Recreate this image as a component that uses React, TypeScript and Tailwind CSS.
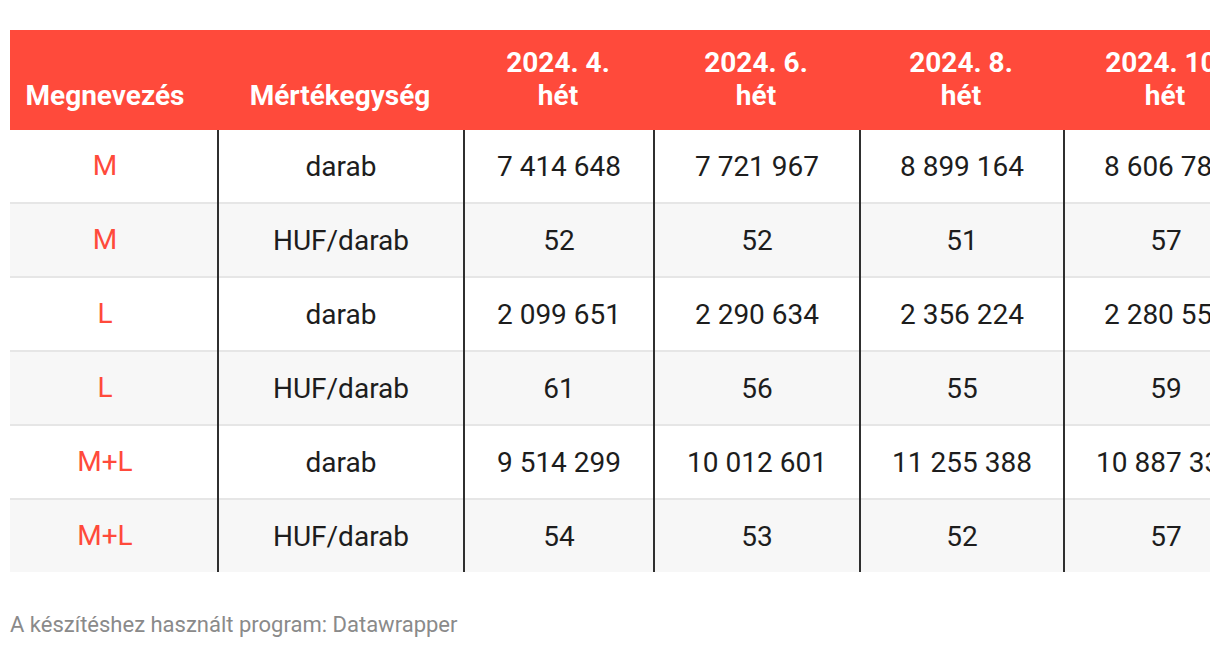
import React from 'react';

const red = 'text-[#ff4a3b]';

const headers = ['Megnevezés', 'Mértékegység', '2024. 4.\nhét', '2024. 6.\nhét', '2024. 8.\nhét', '2024. 10.\nhét'];

const rows = [
  ['M', 'darab', '7 414 648', '7 721 967', '8 899 164', '8 606 781'],
  ['M', 'HUF/darab', '52', '52', '51', '57'],
  ['L', 'darab', '2 099 651', '2 290 634', '2 356 224', '2 280 552'],
  ['L', 'HUF/darab', '61', '56', '55', '59'],
  ['M+L', 'darab', '9 514 299', '10 012 601', '11 255 388', '10 887 333'],
  ['M+L', 'HUF/darab', '54', '53', '52', '57'],
];

const cols = 'grid grid-cols-[207px_246px_190px_206px_204px_204px]';

export default function App() {
  return (
    <div className="bg-white w-[1220px] h-[648px] pt-[30px] pl-[10px]" style={{ fontFamily: 'Roboto, "Liberation Sans", sans-serif' }}>
      <div className="w-[1200px] overflow-hidden">
        <div className="w-[1257px]">
          {/* header */}
          <div className={`${cols} h-[100px] bg-[#ff4a3b] text-white font-bold text-[28px] leading-[33px]`}>
            {headers.map((h, i) => (
              <div
                key={i}
                className={`flex items-end justify-center text-center whitespace-pre-line pb-[18px] ${i === 0 ? 'pr-[17px]' : ''}`}
              >
                {h}
              </div>
            ))}
          </div>

          {/* body */}
          {rows.map((r, ri) => (
            <div
              key={ri}
              className={`${cols} ${ri % 2 === 1 ? 'bg-[#f7f7f7]' : 'bg-white'} ${ri < rows.length - 1 ? 'h-[74px] border-b-2 border-[#e6e6e6]' : 'h-[72px]'}`}
            >
              {r.map((c, ci) => (
                <div
                  key={ci}
                  className={`flex items-center justify-center text-[28px] ${ci === 0 ? `${red} pr-[17px]` : 'text-[#1d1d1d] border-l-2 border-[#2f2f2f] -mb-[2px]'}`}
                >
                  {c}
                </div>
              ))}
            </div>
          ))}
        </div>
      </div>

      <p className="mt-[40px] text-[22px] leading-[26px] text-[#8a8a8a]">A készítéshez használt program: Datawrapper</p>
    </div>
  );
}
